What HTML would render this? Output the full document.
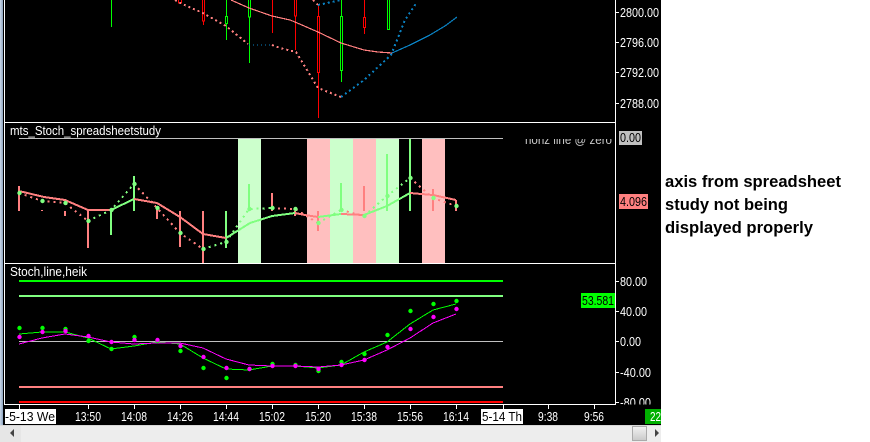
<!DOCTYPE html>
<html><head><meta charset="utf-8"><style>
html,body{margin:0;padding:0;background:#fff;width:870px;height:442px;overflow:hidden}
svg{display:block}
text{font-family:"Liberation Sans",sans-serif}
.a{font-size:13px;fill:#fff}
.k{font-size:13px;fill:#000}
.n{font-size:17px;font-weight:bold;fill:#000}
</style></head><body>
<svg width="870" height="442" viewBox="0 0 870 442" xmlns="http://www.w3.org/2000/svg">
<defs>
<linearGradient id="lb" x1="0" x2="1" y1="0" y2="0"><stop offset="0" stop-color="#c9d6e6"/><stop offset="1" stop-color="#8ea6c2"/></linearGradient>
<linearGradient id="th" x1="0" x2="0" y1="0" y2="1"><stop offset="0" stop-color="#f2f2f2"/><stop offset="1" stop-color="#c9c9c9"/></linearGradient>
<clipPath id="hz"><rect x="500" y="139" width="115" height="20"/></clipPath>
<clipPath id="ax"><rect x="616" y="390" width="45" height="14.5"/></clipPath>
</defs>
<rect width="870" height="442" fill="#fff"/>
<rect x="0" y="0" width="661" height="425" fill="#000"/>
<rect x="0" y="0" width="3" height="425" fill="url(#lb)"/>
<rect x="4" y="0" width="1" height="405" fill="#fff"/>
<rect x="615" y="0" width="1" height="405" fill="#fff"/>
<rect x="5" y="122" width="610" height="1" fill="#fff"/>
<rect x="5" y="263" width="610" height="1" fill="#fff"/>
<rect x="5" y="404" width="610" height="1" fill="#fff"/>

<!-- price pane -->
<g shape-rendering="crispEdges">
<rect x="111" y="0" width="1" height="27" fill="#00ff00"/>
<rect x="178.5" y="-1" width="3" height="4" fill="#000" stroke="#f00"/>
<rect x="203" y="0" width="1" height="25" fill="#ff0000"/><rect x="202.5" y="-1" width="2" height="22" fill="#000" stroke="#f00"/>
<rect x="226" y="0" width="1" height="40" fill="#00ff00"/><rect x="225.5" y="16.5" width="2" height="7" fill="#000" stroke="#0f0"/>
<rect x="249" y="0" width="1" height="63" fill="#00ff00"/><rect x="248.5" y="-1" width="2" height="18" fill="#000" stroke="#0f0"/>
<rect x="272" y="0" width="1" height="33" fill="#ff0000"/>
<rect x="295" y="0" width="1" height="50" fill="#ff0000"/><rect x="294.5" y="-1" width="2" height="17" fill="#000" stroke="#f00"/>
<rect x="318" y="5" width="1" height="113" fill="#ff0000"/><rect x="317.5" y="16.5" width="2" height="56" fill="#000" stroke="#f00"/>
<rect x="341" y="0" width="1" height="82" fill="#00ff00"/><rect x="340.5" y="16.5" width="2" height="54" fill="#000" stroke="#0f0"/>
<rect x="364" y="0" width="1" height="34" fill="#ff0000"/><rect x="363.5" y="17.5" width="2" height="10" fill="#000" stroke="#f00"/>
<rect x="387.5" y="-1" width="2" height="30.5" fill="#000" stroke="#0f0"/>
</g>
<g shape-rendering="crispEdges">
<polyline points="231,0 249,8 272,16 290,20 295,22 318,32 341,43 364,50 378,52 392,53" fill="none" stroke="#ff8080" stroke-width="1.2"/>
<polyline points="392,53 410,45 430,35 445,26 457,17" fill="none" stroke="#0a80c0" stroke-width="1.2"/>
<polyline points="175,0 180,3 203,13 226,26 248,44" fill="none" stroke="#ff8080" stroke-width="2" stroke-dasharray="2 3"/>
<polyline points="249,45 272,45" fill="none" stroke="#0a80c0" stroke-width="1" stroke-dasharray="1 3"/>
<polyline points="272,45 280,48 296,52 318,88 341,97" fill="none" stroke="#ff8080" stroke-width="2" stroke-dasharray="2 3"/>
<polyline points="341,97 364,80 391,55 405,20 417,2" fill="none" stroke="#0a80c0" stroke-width="2" stroke-dasharray="2 3"/>
<polyline points="318,5 341,0" fill="none" stroke="#0a80c0" stroke-width="2" stroke-dasharray="2 3"/>
<polyline points="313,0 318,5" fill="none" stroke="#ff8080" stroke-width="2" stroke-dasharray="2 3"/>
</g>

<text x="10" y="135" class="a" textLength="151" lengthAdjust="spacingAndGlyphs">mts_Stoch_spreadsheetstudy</text>

<!-- spreadsheet pane -->
<g shape-rendering="crispEdges">
<rect x="238" y="139" width="23" height="124" fill="#ccffcc"/>
<rect x="307" y="139" width="23" height="124" fill="#ffbfbf"/>
<rect x="330" y="139" width="23" height="124" fill="#ccffcc"/>
<rect x="353" y="139" width="23" height="124" fill="#ffbfbf"/>
<rect x="376" y="139" width="23" height="124" fill="#ccffcc"/>
<rect x="422" y="139" width="23" height="124" fill="#ffbfbf"/>
<rect x="19" y="138" width="484" height="1" fill="#c0c0c0"/>
<g fill="#ff8080">
<rect x="18" y="186" width="2" height="25"/><rect x="41" y="210" width="2" height="1"/><rect x="64" y="211" width="2" height="5"/>
<rect x="87" y="210" width="2" height="38"/><rect x="156" y="207" width="2" height="12"/><rect x="179" y="211" width="2" height="36"/>
<rect x="202" y="211" width="2" height="52"/><rect x="271" y="193" width="2" height="18"/><rect x="294" y="211" width="2" height="5"/>
<rect x="317" y="211" width="2" height="20"/><rect x="363" y="186" width="2" height="25"/><rect x="432" y="189" width="2" height="22"/>
<rect x="455" y="200" width="2" height="11"/>
</g>
<g fill="#80ff80">
<rect x="110" y="210" width="2" height="25"/><rect x="133" y="176" width="2" height="35"/><rect x="225" y="211" width="2" height="37"/>
<rect x="248" y="184" width="2" height="27"/><rect x="340" y="183" width="2" height="28"/><rect x="386" y="154" width="2" height="57"/>
<rect x="409" y="139" width="2" height="72"/>
</g>
</g>
<g fill="none" stroke-width="2" stroke-dasharray="2 4" shape-rendering="crispEdges">
<polyline points="19,193 42,201 65,203 88,221" stroke="#ff8080"/>
<polyline points="88,221 111,210 134,184" stroke="#80ff80"/>
<polyline points="134,184 157,208 180,233 203,249" stroke="#ff8080"/>
<polyline points="203,249 226,242 249,209 272,208" stroke="#80ff80"/>
<polyline points="272,208 295,209 318,223" stroke="#ff8080"/>
<polyline points="318,223 341,210" stroke="#80ff80"/>
<polyline points="341,210 364,216" stroke="#ff8080"/>
<polyline points="364,216 387,196 410,178" stroke="#80ff80"/>
<polyline points="410,178 433,198 456,206" stroke="#ff8080"/>
</g>
<g fill="none" stroke-width="2" shape-rendering="crispEdges">
<polyline points="19,191 44,197 65,200 88,210 111,210" stroke="#ff8080"/>
<polyline points="111,210 134,199" stroke="#80ff80"/>
<polyline points="134,199 157,203 180,217 203,234 226,238" stroke="#ff8080"/>
<polyline points="226,238 250,223 272,216 295,213" stroke="#80ff80"/>
<polyline points="295,213 305,215 318,217" stroke="#ff8080"/>
<polyline points="318,217 341,214" stroke="#80ff80"/>
<polyline points="341,214 364,215" stroke="#ff8080"/>
<polyline points="364,215 387,206 410,193" stroke="#80ff80"/>
<polyline points="410,193 433,195 456,200" stroke="#ff8080"/>
</g>
<g fill="#80ff80">
<circle cx="19.5" cy="193" r="2.2"/><circle cx="42.5" cy="201" r="2.2"/><circle cx="65.5" cy="203" r="2.2"/><circle cx="88.5" cy="221" r="2.2"/>
<circle cx="111.5" cy="210" r="2.2"/><circle cx="134.5" cy="184" r="2.2"/><circle cx="157.5" cy="208" r="2.2"/><circle cx="180.5" cy="233" r="2.2"/>
<circle cx="203.5" cy="249" r="2.2"/><circle cx="226.5" cy="242" r="2.2"/><circle cx="249.5" cy="209" r="2.2"/><circle cx="272.5" cy="208" r="2.2"/>
<circle cx="295.5" cy="209" r="2.2"/><circle cx="318.5" cy="223" r="2.2"/><circle cx="341.5" cy="210" r="2.2"/><circle cx="364.5" cy="216" r="2.2"/>
<circle cx="387.5" cy="196" r="2.2"/><circle cx="410.5" cy="178" r="2.2"/><circle cx="433.5" cy="198" r="2.2"/><circle cx="456.5" cy="206" r="2.2"/>
</g>
<g clip-path="url(#hz)"><text x="525" y="144" font-size="13" fill="#c8c8c8" textLength="87" lengthAdjust="spacingAndGlyphs">horiz line @ zero</text></g>

<!-- stoch pane -->
<text x="10" y="276" class="a" textLength="77" lengthAdjust="spacingAndGlyphs">Stoch,line,heik</text>
<g shape-rendering="crispEdges">
<rect x="19" y="280" width="484" height="2" fill="#00ff00"/>
<rect x="19" y="295" width="484" height="2" fill="#80ff80"/>
<rect x="19" y="341" width="484" height="1" fill="#c0c0c0"/>
<rect x="19" y="386" width="484" height="2" fill="#ff8080"/>
<rect x="19" y="401" width="484" height="2" fill="#ff0000"/>
</g>
<polyline points="19,334 42,332 65,332 88,338 111,349 134,346 157,342 180,344 203,358 226,369 249,370 272,366 295,366 318,368 341,365 364,352 387,342 410,324 433,310 456,304" fill="none" stroke="#00ff00" stroke-width="1" shape-rendering="crispEdges"/>
<polyline points="19,344 42,338 65,334 88,337 111,342 134,344 157,343 180,343 203,348 226,359 249,365 272,366 295,366 318,367 341,365 364,360 387,350 410,338 433,323 456,314" fill="none" stroke="#ff00ff" stroke-width="1" shape-rendering="crispEdges"/>
<g fill="#00ff00">
<circle cx="19.5" cy="328" r="2.2"/><circle cx="42.5" cy="328" r="2.2"/><circle cx="65.5" cy="329" r="2.2"/><circle cx="88.5" cy="341" r="2.2"/>
<circle cx="111.5" cy="349" r="2.2"/><circle cx="134.5" cy="337" r="2.2"/><circle cx="157.5" cy="341" r="2.2"/><circle cx="180.5" cy="351" r="2.2"/>
<circle cx="203.5" cy="368" r="2.2"/><circle cx="226.5" cy="378" r="2.2"/><circle cx="249.5" cy="369" r="2.2"/><circle cx="272.5" cy="364" r="2.2"/>
<circle cx="295.5" cy="365" r="2.2"/><circle cx="318.5" cy="371" r="2.2"/><circle cx="341.5" cy="362" r="2.2"/><circle cx="364.5" cy="354" r="2.2"/>
<circle cx="387.5" cy="335" r="2.2"/><circle cx="410.5" cy="311" r="2.2"/><circle cx="433.5" cy="304" r="2.2"/><circle cx="456.5" cy="301" r="2.2"/>
</g>
<g fill="#ff00ff">
<circle cx="19.5" cy="337" r="2.2"/><circle cx="42.5" cy="332" r="2.2"/><circle cx="65.5" cy="331" r="2.2"/><circle cx="88.5" cy="336" r="2.2"/>
<circle cx="111.5" cy="342" r="2.2"/><circle cx="134.5" cy="340" r="2.2"/><circle cx="157.5" cy="340" r="2.2"/><circle cx="180.5" cy="346" r="2.2"/>
<circle cx="203.5" cy="357" r="2.2"/><circle cx="226.5" cy="368" r="2.2"/><circle cx="249.5" cy="369" r="2.2"/><circle cx="272.5" cy="366" r="2.2"/>
<circle cx="295.5" cy="366" r="2.2"/><circle cx="318.5" cy="369" r="2.2"/><circle cx="341.5" cy="365" r="2.2"/><circle cx="364.5" cy="360" r="2.2"/>
<circle cx="387.5" cy="347" r="2.2"/><circle cx="410.5" cy="329" r="2.2"/><circle cx="433.5" cy="317" r="2.2"/><circle cx="456.5" cy="309" r="2.2"/>
</g>

<!-- right axis -->
<g fill="#fff" shape-rendering="crispEdges">
<rect x="616" y="12" width="3" height="1"/><rect x="616" y="42" width="3" height="1"/><rect x="616" y="72" width="3" height="1"/><rect x="616" y="103" width="3" height="1"/>
<rect x="616" y="281" width="3" height="1"/><rect x="616" y="311" width="3" height="1"/><rect x="616" y="341" width="3" height="1"/><rect x="616" y="372" width="3" height="1"/><rect x="616" y="402" width="3" height="1"/>
</g>
<text x="620" y="17" class="a" textLength="39" lengthAdjust="spacingAndGlyphs">2800.00</text>
<text x="620" y="47" class="a" textLength="39" lengthAdjust="spacingAndGlyphs">2796.00</text>
<text x="620" y="77" class="a" textLength="39" lengthAdjust="spacingAndGlyphs">2792.00</text>
<text x="620" y="108" class="a" textLength="39" lengthAdjust="spacingAndGlyphs">2788.00</text>
<rect x="619" y="131" width="23" height="14" fill="#c0c0c0"/>
<text x="620" y="142" class="k" textLength="21" lengthAdjust="spacingAndGlyphs">0.00</text>
<rect x="619" y="194" width="29" height="15" fill="#ff8080"/>
<text x="620" y="206" class="k" textLength="27" lengthAdjust="spacingAndGlyphs">4.096</text>
<rect x="581" y="293" width="34" height="15" fill="#00ff00"/>
<text x="582" y="305" class="k" textLength="32" lengthAdjust="spacingAndGlyphs">53.581</text>
<text x="620" y="286" class="a" textLength="27" lengthAdjust="spacingAndGlyphs">80.00</text>
<text x="620" y="316" class="a" textLength="27" lengthAdjust="spacingAndGlyphs">40.00</text>
<text x="620" y="346" class="a" textLength="21" lengthAdjust="spacingAndGlyphs">0.00</text>
<text x="620" y="377" class="a" textLength="31" lengthAdjust="spacingAndGlyphs">-40.00</text>
<g clip-path="url(#ax)"><text x="620" y="407" class="a" textLength="31" lengthAdjust="spacingAndGlyphs">-80.00</text></g>

<!-- time axis -->
<g fill="#fff" shape-rendering="crispEdges">
<rect x="19" y="405" width="1" height="4"/><rect x="88" y="405" width="1" height="4"/><rect x="134" y="405" width="1" height="4"/><rect x="180" y="405" width="1" height="4"/><rect x="226" y="405" width="1" height="4"/><rect x="272" y="405" width="1" height="4"/><rect x="318" y="405" width="1" height="4"/><rect x="364" y="405" width="1" height="4"/><rect x="410" y="405" width="1" height="4"/><rect x="456" y="405" width="1" height="4"/><rect x="503" y="405" width="1" height="4"/><rect x="548" y="405" width="1" height="4"/><rect x="594" y="405" width="1" height="4"/>
<rect x="5" y="409" width="51" height="15"/>
<rect x="481" y="409" width="42" height="15"/>
</g>
<text x="5" y="421" class="k" textLength="50" lengthAdjust="spacingAndGlyphs">-5-13 We</text>
<text x="75" y="421" class="a" textLength="26" lengthAdjust="spacingAndGlyphs">13:50</text>
<text x="121" y="421" class="a" textLength="26" lengthAdjust="spacingAndGlyphs">14:08</text>
<text x="167" y="421" class="a" textLength="26" lengthAdjust="spacingAndGlyphs">14:26</text>
<text x="213" y="421" class="a" textLength="26" lengthAdjust="spacingAndGlyphs">14:44</text>
<text x="259" y="421" class="a" textLength="26" lengthAdjust="spacingAndGlyphs">15:02</text>
<text x="305" y="421" class="a" textLength="26" lengthAdjust="spacingAndGlyphs">15:20</text>
<text x="351" y="421" class="a" textLength="26" lengthAdjust="spacingAndGlyphs">15:38</text>
<text x="397" y="421" class="a" textLength="26" lengthAdjust="spacingAndGlyphs">15:56</text>
<text x="443" y="421" class="a" textLength="26" lengthAdjust="spacingAndGlyphs">16:14</text>
<text x="482" y="421" class="k" textLength="40" lengthAdjust="spacingAndGlyphs">5-14 Th</text>
<text x="538" y="421" class="a" textLength="20" lengthAdjust="spacingAndGlyphs">9:38</text>
<text x="584" y="421" class="a" textLength="20" lengthAdjust="spacingAndGlyphs">9:56</text>
<rect x="645" y="409" width="16" height="15" fill="#00b000"/>
<text x="650" y="421" class="a" textLength="11" lengthAdjust="spacingAndGlyphs">22</text>

<!-- scrollbar -->
<rect x="0" y="425" width="661" height="17" fill="#ededed"/>
<rect x="0" y="425" width="661" height="1" fill="#d8d8d8"/>
<rect x="0" y="426" width="21" height="16" fill="#e6e6e6"/>
<rect x="632.5" y="426.5" width="14" height="14" fill="url(#th)" stroke="#aaa" stroke-width="1" shape-rendering="crispEdges"/>
<path d="M10 433 L14 429 L14 437 Z" fill="#444"/>
<path d="M655 429 L655 437 L659 433 Z" fill="#444"/>

<!-- note -->
<text x="665" y="187" class="n" textLength="176" lengthAdjust="spacingAndGlyphs">axis from spreadsheet</text>
<text x="665" y="210" class="n" textLength="123" lengthAdjust="spacingAndGlyphs">study not being</text>
<text x="665" y="233" class="n" textLength="148" lengthAdjust="spacingAndGlyphs">displayed properly</text>
</svg>
</body></html>
